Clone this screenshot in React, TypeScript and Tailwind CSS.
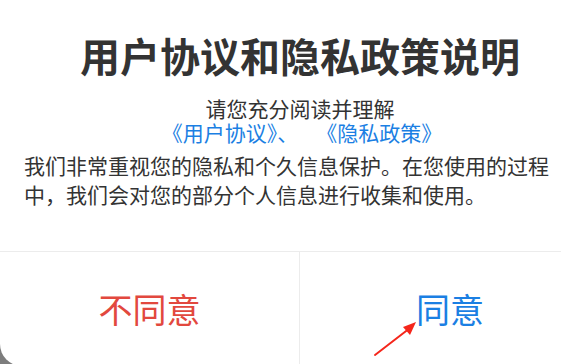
import React from "react";

const font = { fontFamily: '"Noto Sans CJK SC", "Noto Sans", sans-serif' };

export default function App() {
  return (
    <div className="w-[561px] h-[364px] overflow-hidden bg-[#7d7d7d] relative" style={font}>
      <div className="w-[600px] h-[366px] bg-white rounded-bl-[22px] flex flex-col relative">
        <div className="pt-[31px] text-center text-[40px] leading-[48px] font-bold text-[#333333]">
          用户协议和隐私政策说明
        </div>
        <div className="mt-[17px] text-center text-[21px] leading-[24px] text-[#333333]">
          请您充分阅读并理解
        </div>
        <div className="flex justify-center text-[21px] leading-[24px] text-[#1b7fe3] pl-[4px]">
          <span>《用户协议》、</span>
          <span className="ml-[18px]">《隐私政策》</span>
        </div>
        <div className="mt-[7px] ml-[24px] w-[536px] text-[21px] leading-[29px] text-[#333333]">
          我们非常重视您的隐私和个久信息保护。在您使用的过程中，我们会对您的部分个人信息进行收集和使用。
        </div>
        <div className="mt-auto h-[115px] border-t border-[#ececec] flex">
          <div className="w-[300px] border-r border-[#ececec] flex items-center justify-center text-[34px] text-[#e2483e] pb-[2px]">
            不同意
          </div>
          <div className="flex-1 flex items-center justify-center text-[34px] text-[#1b7fe3] pb-[2px]">
            同意
          </div>
        </div>
        <svg className="absolute left-[370px] top-[316px]" width="52" height="44" viewBox="0 0 52 44">
          <line x1="5" y1="39" x2="40" y2="12" stroke="#f5261b" strokeWidth="2" strokeLinecap="round" />
          <polygon points="46,6 33,11 40,19" fill="#f5261b" />
        </svg>
      </div>
    </div>
  );
}
